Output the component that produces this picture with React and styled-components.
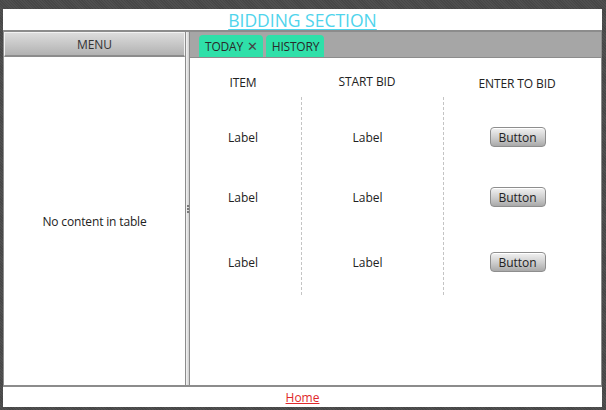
import React from "react";
import styled, { createGlobalStyle } from "styled-components";

const GlobalStyle = createGlobalStyle`
  html, body {
    margin: 0;
    padding: 0;
    background: #4b4b4b;
  }
  body {
    font-family: "Open Sans", "Liberation Sans", sans-serif;
  }
`;

const Screen = styled.div`
  width: 606px;
  height: 410px;
  box-sizing: border-box;
  padding: 9px 4px 3px 3px;
  background-color: #4b4b4b;
  background-image: repeating-linear-gradient(45deg, #505050 0 1px, #474747 1px 2px);
`;

const Window = styled.div`
  height: 100%;
  background: #fff;
  display: flex;
  flex-direction: column;
`;

const Header = styled.div`
  height: 21px;
  display: flex;
  align-items: center;
  justify-content: center;
  border-bottom: 2px solid #8c8c8c;
`;

const Title = styled.a`
  color: #4fd4ec;
  font-size: 17.5px;
  line-height: 20px;
  text-decoration: underline;
  text-underline-offset: 2px;
  margin-top: 1px;
`;

const Split = styled.div`
  flex: 1;
  display: flex;
  min-height: 0;
  border-bottom: 2px solid #8c8c8c;
`;

const LeftPane = styled.div`
  width: 181px;
  display: flex;
  flex-direction: column;
  border-left: 1px solid #8c8c8c;
`;

const MenuHeader = styled.div`
  height: 22px;
  display: flex;
  align-items: center;
  justify-content: center;
  font-size: 12px;
  color: #333;
  background: linear-gradient(#dcdcdc, #b2b2b2);
  border: 1px solid #f2f2f2;
  border-bottom: 2px solid #8c8c8c;
`;

const EmptyTable = styled.div`
  flex: 1;
  display: flex;
  align-items: center;
  justify-content: center;
  font-size: 12px;
  letter-spacing: -0.15px;
  color: #222;
`;

const Divider = styled.div`
  width: 3px;
  border-left: 1px solid #8c8c8c;
  border-right: 1px solid #8c8c8c;
  background: linear-gradient(90deg, #f4f4f4, #cfcfcf);
  display: flex;
  flex-direction: column;
  align-items: center;
  justify-content: center;
  gap: 1px;
`;

const Dot = styled.span`
  width: 2px;
  height: 2px;
  background: #7a7a7a;
`;

const RightPane = styled.div`
  flex: 1;
  display: flex;
  flex-direction: column;
  border-right: 1px solid #8c8c8c;
`;

const TabBar = styled.div`
  height: 26px;
  box-sizing: border-box;
  background: #a6a6a6;
  border-bottom: 1px solid #8c8c8c;
  display: flex;
  align-items: flex-end;
  gap: 3px;
  padding-left: 9px;
`;

const Tab = styled.div`
  height: 22px;
  display: flex;
  align-items: center;
  gap: 4px;
  padding: 0 5px 0 6px;
  background: #2fe0a9;
  border-radius: 4px 4px 0 0;
  font-size: 12px;
  letter-spacing: -0.2px;
  color: #2a2a2a;
`;

const Close = styled.span`
  font-size: 13px;
  color: #444;
  line-height: 1;
`;

const Content = styled.div`
  flex: 1;
  display: flex;
  flex-direction: column;
`;

const HeadRow = styled.div`
  display: flex;
  padding-top: 16px;
  height: 23px;
`;

const Body = styled.div`
  display: flex;
`;

const Column = styled.div`
  width: ${(p) => p.$w}px;
  flex: ${(p) => (p.$grow ? 1 : "none")};
  box-sizing: border-box;
  padding-right: ${(p) => p.$shift}px;
  border-left: ${(p) => (p.$line ? "1px dashed #c4c4c4" : "none")};
  display: flex;
  flex-direction: column;
  align-items: center;
  padding-top: ${(p) => p.$top || 0}px;
  padding-bottom: ${(p) => p.$bottom || 0}px;
`;

const HeadCell = styled.div`
  font-size: 12px;
  letter-spacing: -0.1px;
  color: #222;
  margin-top: ${(p) => p.$dy || 0}px;
`;

const Cell = styled.div`
  height: 24px;
  margin-top: ${(p) => p.$space}px;
  display: flex;
  align-items: center;
  font-size: 12px;
  color: #222;
`;

const Button = styled.button`
  width: 56px;
  height: 20px;
  padding: 0;
  font-family: inherit;
  font-size: 12px;
  color: #222;
  border: 1px solid #8e8e8e;
  border-radius: 4px;
  background: linear-gradient(#f2f2f2, #cdcdcd 55%, #a9a9a9);
  box-shadow: inset 0 1px 0 #fff;
`;

const Footer = styled.div`
  height: 20px;
  display: flex;
  align-items: center;
  justify-content: center;
`;

const HomeLink = styled.a`
  color: #e0282a;
  font-size: 12px;
  text-decoration: underline;
`;

const columns = [
  { title: "ITEM", w: 111, shift: 5 },
  { title: "START BID", w: 142, shift: 10, line: true, dy: -1 },
  { title: "ENTER TO BID", w: 150, shift: 10, line: true, grow: true, dy: 1 },
];

// space above each row, rows are not evenly spaced in the screen
const rows = [0, 36, 41];

export default function App() {
  return (
    <>
      <GlobalStyle />
      <Screen>
        <Window>
          <Header>
            <Title>BIDDING SECTION</Title>
          </Header>
          <Split>
            <LeftPane>
              <MenuHeader>MENU</MenuHeader>
              <EmptyTable>No content in table</EmptyTable>
            </LeftPane>
            <Divider>
              <Dot />
              <Dot />
              <Dot />
            </Divider>
            <RightPane>
              <TabBar>
                <Tab>
                  TODAY <Close>✕</Close>
                </Tab>
                <Tab>HISTORY</Tab>
              </TabBar>
              <Content>
                <HeadRow>
                  {columns.map((c) => (
                    <Column key={c.title} $w={c.w} $shift={c.shift} $grow={c.grow}>
                      <HeadCell $dy={c.dy}>{c.title}</HeadCell>
                    </Column>
                  ))}
                </HeadRow>
                <Body>
                  {columns.map((c, i) => (
                    <Column
                      key={c.title}
                      $w={c.w}
                      $shift={c.shift}
                      $grow={c.grow}
                      $line={c.line}
                      $top={28}
                      $bottom={21}
                    >
                      {rows.map((space, r) => (
                        <Cell key={r} $space={space}>
                          {i === 2 ? <Button>Button</Button> : "Label"}
                        </Cell>
                      ))}
                    </Column>
                  ))}
                </Body>
              </Content>
            </RightPane>
          </Split>
          <Footer>
            <HomeLink>Home</HomeLink>
          </Footer>
        </Window>
      </Screen>
    </>
  );
}
